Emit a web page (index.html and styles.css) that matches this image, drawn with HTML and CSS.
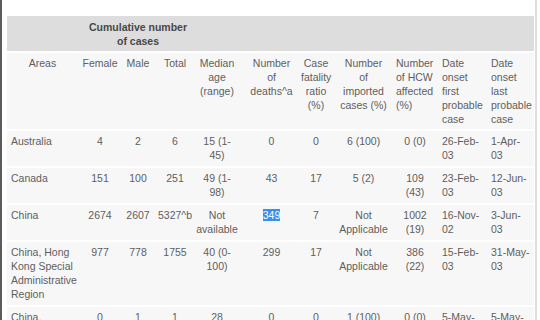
FILE: index.html
```html
<!DOCTYPE html>
<html>
<head>
<meta charset="utf-8">
<link rel="stylesheet" href="styles.css">
</head>
<body>
<div class="frame">
<table class="data">
<colgroup>
<col class="c-area"><col class="c-fem"><col class="c-male"><col class="c-tot"><col class="c-med"><col class="c-dth"><col class="c-cfr"><col class="c-imp"><col class="c-hcw"><col class="c-df"><col class="c-dl">
</colgroup>
<thead>
<tr class="band">
<th></th>
<th colspan="3" class="cum">Cumulative number of cases</th>
<th></th><th></th><th></th><th></th><th></th><th></th><th></th>
</tr>
<tr class="heads">
<th>Areas</th>
<th>Female</th>
<th>Male</th>
<th>Total</th>
<th class="med">Median age (range)</th>
<th>Number of deaths^a</th>
<th>Case fatality ratio (%)</th>
<th>Number of imported cases (%)</th>
<th class="left">Number of HCW affected (%)</th>
<th class="left">Date onset first probable case</th>
<th class="left">Date onset last probable case</th>
</tr>
</thead>
<tbody>
<tr>
<td class="left">Australia</td><td>4</td><td>2</td><td>6</td><td class="med">15 (1-45)</td><td>0</td><td>0</td><td>6 (100)</td><td>0 (0)</td><td class="left">26-Feb-03</td><td class="left">1-Apr-03</td>
</tr>
<tr>
<td class="left">Canada</td><td>151</td><td>100</td><td>251</td><td class="med">49 (1-98)</td><td>43</td><td>17</td><td>5 (2)</td><td>109 (43)</td><td class="left">23-Feb-03</td><td class="left">12-Jun-03</td>
</tr>
<tr>
<td class="left">China</td><td>2674</td><td>2607</td><td>5327^b</td><td class="med">Not available</td><td><span class="sel">349</span></td><td>7</td><td>Not Applicable</td><td>1002 (19)</td><td class="left">16-Nov-02</td><td class="left">3-Jun-03</td>
</tr>
<tr>
<td class="left">China, Hong Kong Special Administrative Region</td><td>977</td><td>778</td><td>1755</td><td class="med">40 (0-100)</td><td>299</td><td>17</td><td>Not Applicable</td><td>386 (22)</td><td class="left">15-Feb-03</td><td class="left">31-May-03</td>
</tr>
<tr>
<td class="left">China, Macao</td><td>0</td><td>1</td><td>1</td><td class="med">28</td><td>0</td><td>0</td><td>1 (100)</td><td>0 (0)</td><td class="left">5-May-03</td><td class="left">5-May-03</td>
</tr>
</tbody>
</table>
</div>
</body>
</html>
```
FILE: styles.css
```css
html, body {
  margin: 0;
  padding: 0;
  background: #ffffff;
  overflow: hidden;
}
.frame {
  width: 537px;
  height: 320px;
  box-sizing: border-box;
  border-left: 2px solid #5c5c5c;
  border-right: 2px solid #dedede;
  padding: 16px 1px 0 5px;
  overflow: hidden;
}
.data {
  table-layout: fixed;
  width: 527px;
  border-collapse: collapse;
  font-family: "Liberation Sans", Arial, sans-serif;
  font-size: 10.5px;
  line-height: 14px;
  color: #5e5e5e;
}
.c-area { width: 71px; }
.c-fem { width: 44px; }
.c-male { width: 32px; }
.c-tot { width: 42px; }
.c-med { width: 50px; }
.c-dth { width: 51px; }
.c-cfr { width: 38px; }
.c-imp { width: 57px; }
.c-hcw { width: 46px; }
.c-df { width: 49px; }
.c-dl { width: 47px; }
.data th, .data td {
  padding: 3px 4px 4px;
  text-align: center;
  vertical-align: top;
  font-weight: normal;
}
.data .left { text-align: left; }
.data .med { padding-left: 0; padding-right: 8px; }
.band th {
  background: #dddddd;
  font-weight: bold;
  color: #484848;
  padding: 4px 4px 3px;
}
.band th.cum { padding-left: 6px; padding-right: 4px; }
.heads th {
  background: #f7f7f7;
  border-top: 2px solid #ffffff;
  padding: 3px 4px 3px;
}
.data tbody td {
  background: #f7f7f7;
  border-top: 2px solid #ffffff;
}
.sel {
  background: #3b8ff0;
  color: #ffffff;
}
```
